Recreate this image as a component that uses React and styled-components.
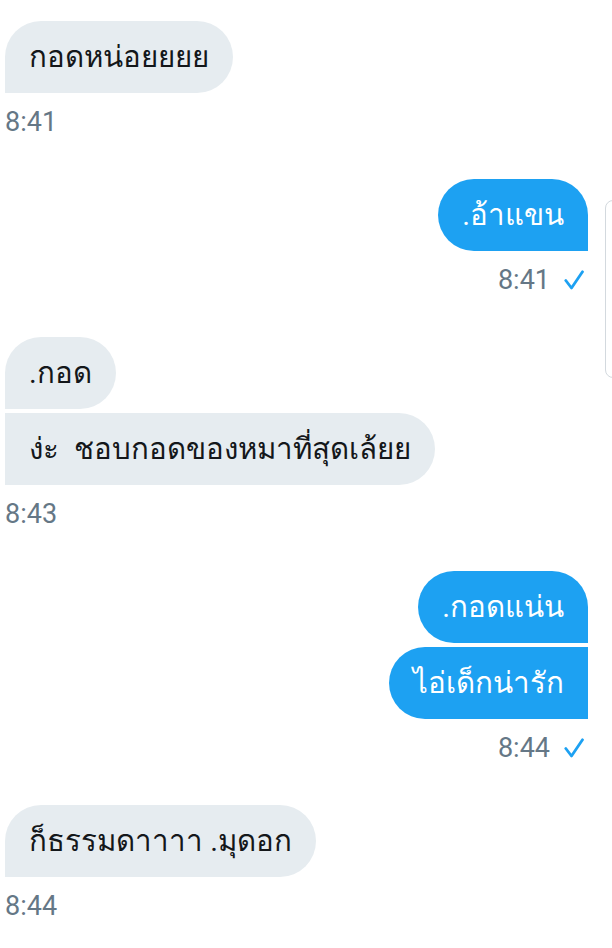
import React from 'react';
import styled, { createGlobalStyle } from 'styled-components';

const Global = createGlobalStyle`
  body {
    margin: 0;
    background: #ffffff;
    font-family: Roboto, "Noto Sans", "DejaVu Sans", sans-serif;
  }
`;

const Thread = styled.div`
  position: relative;
  width: 612px;
  height: 948px;
  overflow: hidden;
  padding: 21px 24px 0 5px;
  box-sizing: border-box;
  display: flex;
  flex-direction: column;
  gap: 41px;
`;

const Group = styled.div`
  display: flex;
  flex-direction: column;
  align-items: ${p => (p.mine ? 'flex-end' : 'flex-start')};
  gap: 4px;
`;

const Bubble = styled.div`
  height: 72px;
  box-sizing: border-box;
  display: flex;
  align-items: center;
  padding: 0 24px;
  font-size: 29.5px;
  line-height: 36px;
  white-space: pre;
  background: ${p => (p.mine ? '#1da1f2' : '#e6ecf0')};
  color: ${p => (p.mine ? '#ffffff' : '#14171a')};
  border-radius: ${p => {
    const r = '36px';
    if (p.mine) return `${r} ${p.first ? r : 0} 0 ${r}`;
    return `${p.first ? r : 0} ${r} ${r} 0`;
  }};
`;

const Meta = styled.div`
  display: flex;
  align-items: center;
  gap: 14px;
  margin-top: 9px;
  font-size: 27px;
  line-height: 32px;
  color: #657786;
  padding-right: ${p => (p.mine ? '4px' : 0)};
`;

const Scroller = styled.div`
  position: absolute;
  left: 605px;
  top: 200px;
  width: 20px;
  height: 178px;
  box-sizing: border-box;
  border: 1px solid #d3d9de;
  border-radius: 8px;
`;

const Check = () => (
  <svg width="20" height="20" viewBox="0 0 20 20">
    <path d="M1.8 10.5 L7.5 18 L18.5 1.8" fill="none" stroke="#1da1f2" strokeWidth="2.8" strokeLinecap="round" strokeLinejoin="round" />
  </svg>
);

const groups = [
  { mine: false, time: '8:41', msgs: ['กอดหน่อยยยย'] },
  { mine: true, time: '8:41', msgs: ['.อ้าแขน'] },
  { mine: false, time: '8:43', msgs: ['.กอด', 'ง่ะ  ชอบกอดของหมาที่สุดเล้ยย'] },
  { mine: true, time: '8:44', msgs: ['.กอดแน่น', 'ไอ่เด็กน่ารัก'] },
  { mine: false, time: '8:44', msgs: ['ก็ธรรมดาาาา .มุดอก'] },
];

export default function App() {
  return (
    <>
      <Global />
      <Thread>
        {groups.map((g, i) => (
          <Group key={i} mine={g.mine}>
            {g.msgs.map((m, j) => (
              <Bubble key={j} mine={g.mine} first={j === 0}>
                {m}
              </Bubble>
            ))}
            <Meta mine={g.mine}>
              <span>{g.time}</span>
              {g.mine && <Check />}
            </Meta>
          </Group>
        ))}
        <Scroller />
      </Thread>
    </>
  );
}
